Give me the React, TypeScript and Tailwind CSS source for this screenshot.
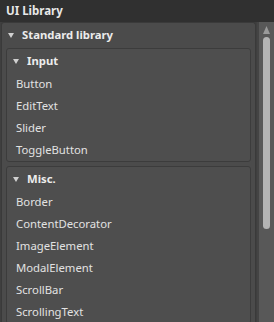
const Tri = ({ className }: { className: string }) => (
  <svg width="6" height="5" viewBox="0 0 6 5" className={className}>
    <path d="M0 0h6L3 5z" fill="#d0d0d0" />
  </svg>
);

function Group({ title, items }: { title: string; items: string[] }) {
  return (
    <div className="mx-[4px] rounded-[3px] border border-[#3c3c3c] bg-[#4e4e4e]">
      <div className="flex h-[24px] items-center">
        <Tri className="ml-[6px] mr-[8px]" />
        <span className="text-[11.3px] font-bold text-[#ececec]">{title}</span>
      </div>
      <div>
        {items.map((it) => (
          <div key={it} className="flex h-[22px] items-center pl-[9px] text-[11.3px] text-[#e2e2e2]">
            {it}
          </div>
        ))}
      </div>
    </div>
  );
}

export default function App() {
  return (
    <div
      className="flex h-[322px] w-[274px] flex-col overflow-hidden bg-[#3f3f3f]"
      style={{ fontFamily: '"Noto Sans", "Open Sans", sans-serif' }}
    >
      <div className="flex h-[22px] shrink-0 items-center bg-[#303030] px-[6px] text-[11.5px] font-bold text-[#e8e8e8]">
        UI Library
      </div>
      <div className="flex flex-1">
        <div className="ml-[1px] mr-[1px] flex-1 rounded-t-[3px] border border-b-0 border-[#3a3a3a] bg-[#4b4b4b]">
          <div className="flex h-[25px] items-center">
            <Tri className="ml-[6px] mr-[8px]" />
            <span className="text-[11.3px] font-bold text-[#ececec]">Standard library</span>
          </div>
          <div className="flex flex-col gap-[4px]">
            <Group title="Input" items={["Button", "EditText", "Slider", "ToggleButton"]} />
            <Group
              title="Misc."
              items={["Border", "ContentDecorator", "ImageElement", "ModalElement", "ScrollBar", "ScrollingText"]}
            />
          </div>
        </div>
        <div className="flex w-[17px] flex-col items-center border-l-2 border-[#444] bg-[#585858] pt-[4px]">
          <svg width="7" height="8" viewBox="0 0 7 8">
            <path d="M3.5 0L7 8H0z" fill="#9a9a9a" />
          </svg>
          <div className="mt-[3px] h-[192px] w-[7px] rounded-full bg-[#b4b4b4]" />
        </div>
      </div>
    </div>
  );
}
